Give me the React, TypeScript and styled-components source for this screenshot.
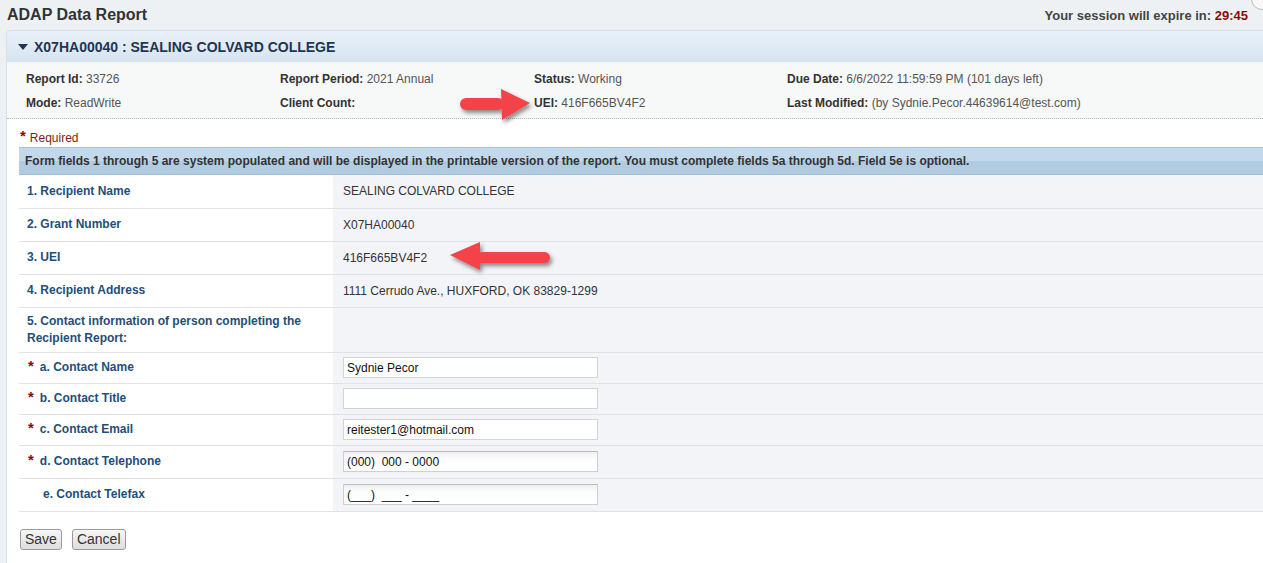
import styled, { createGlobalStyle } from 'styled-components';

const GlobalStyle = createGlobalStyle`
  html, body {
    margin: 0;
    padding: 0;
    background: #eef1f4;
    font-family: "Liberation Sans", Arial, sans-serif;
    overflow: hidden;
  }
`;

const info = [
  [
    { label: 'Report Id:', value: '33726' },
    { label: 'Report Period:', value: '2021 Annual' },
    { label: 'Status:', value: 'Working' },
    { label: 'Due Date:', value: '6/6/2022 11:59:59 PM (101 days left)' },
  ],
  [
    { label: 'Mode:', value: 'ReadWrite' },
    { label: 'Client Count:', value: '' },
    { label: 'UEI:', value: '416F665BV4F2' },
    { label: 'Last Modified:', value: '(by Sydnie.Pecor.44639614@test.com)' },
  ],
];

const fixedRows = [
  { label: '1. Recipient Name', value: 'SEALING COLVARD COLLEGE' },
  { label: '2. Grant Number', value: 'X07HA00040' },
  { label: '3. UEI', value: '416F665BV4F2' },
  { label: '4. Recipient Address', value: '1111 Cerrudo Ave., HUXFORD, OK 83829-1299' },
];

const contactRows = [
  { label: 'a. Contact Name', value: 'Sydnie Pecor', required: true, masked: false },
  { label: 'b. Contact Title', value: '', required: true, masked: false },
  { label: 'c. Contact Email', value: 'reitester1@hotmail.com', required: true, masked: false },
  { label: 'd. Contact Telephone', value: '(000)  000 - 0000', required: true, masked: true },
  { label: 'e. Contact Telefax', value: '(___)  ___ - ____', required: false, masked: true },
];

const Page = styled.div`
  position: relative;
  width: 1263px;
  height: 563px;
  padding-left: 6px;
  box-sizing: border-box;
  display: flex;
  flex-direction: column;
`;

const TopBar = styled.div`
  display: flex;
  justify-content: space-between;
  align-items: center;
  height: 30px;
  padding: 0 15px 0 1px;
`;

const Title = styled.h1`
  margin: 0;
  font-size: 16px;
  font-weight: bold;
  color: #333;
`;

const Session = styled.div`
  font-size: 13px;
  font-weight: bold;
  color: #444;
  span {
    color: #8b0a0a;
  }
`;

const CloseCircle = styled.div`
  position: absolute;
  right: -10px;
  top: -12px;
  width: 20px;
  height: 20px;
  border-radius: 50%;
  border: 1px solid #bbb;
  background: #f8f8f8;
`;

const Panel = styled.div`
  flex: 1;
  width: 1270px;
  background: #fff;
  border-left: 1px solid #d6e0ea;
  border-top-left-radius: 4px;
`;

const PanelHeader = styled.div`
  display: flex;
  align-items: center;
  gap: 6px;
  height: 32px;
  padding-left: 11px;
  background: linear-gradient(#e9f1f9, #d6e4f0);
  border-top: 1px solid #d3dfeb;
  border-top-left-radius: 4px;
  box-sizing: border-box;
  font-size: 14px;
  font-weight: bold;
  color: #1f3552;
`;

const Caret = styled.span`
  width: 0;
  height: 0;
  border-left: 5px solid transparent;
  border-right: 5px solid transparent;
  border-top: 6px solid #1f3552;
  margin-top: 1px;
`;

const InfoBlock = styled.div`
  background: #f7f8f8;
  padding: 5px 0 3px 19px;
  border-bottom: 1px dotted #b5b5b5;
`;

const InfoRow = styled.div`
  display: grid;
  grid-template-columns: 254px 254px 253px 1fr;
  height: 24px;
  align-items: center;
  font-size: 12px;
  color: #555;
  b {
    color: #333;
  }
`;

const Body = styled.div`
  padding: 10px 0 0 12px;
`;

const RequiredNote = styled.div`
  font-size: 12px;
  color: #7a1f16;
  padding-left: 1px;
  height: 17px;
  display: flex;
  align-items: center;
  gap: 4px;
`;

const Star = styled.span`
  color: #8b0a0a;
  font-size: 15px;
  font-weight: bold;
  line-height: 1;
  transform: translateY(-2px);
`;

const Banner = styled.div`
  margin-top: 1px;
  height: 28px;
  display: flex;
  align-items: center;
  padding-left: 6px;
  background: linear-gradient(#c2d8eb 0%, #c2d8eb 50%, #b1cbe0 52%, #b1cbe0 100%);
  border-top: 1px solid #a9c3da;
  border-bottom: 1px solid #a3bdd4;
  box-sizing: border-box;
  font-size: 12px;
  font-weight: bold;
  color: #333;
`;

const Table = styled.table`
  width: 100%;
  border-collapse: collapse;
  font-size: 12px;
`;

const Row = styled.tr<{ $height: number }>`
  height: ${(p) => p.$height}px;
  border-bottom: 1px solid #e0e2e6;
`;

const LabelCell = styled.td`
  width: 314px;
  padding: 0 0 0 8px;
  box-sizing: border-box;
  font-weight: bold;
  color: #1f4e79;
  line-height: 17px;
  background: #fff;
`;

const SubLabel = styled.div<{ $required: boolean }>`
  display: flex;
  align-items: center;
  gap: 6px;
  padding-left: ${(p) => (p.$required ? '1px' : '16px')};
`;

const ValueCell = styled.td`
  padding: 0 0 0 10px;
  background: #f3f4f8;
  color: #333;
`;

const Input = styled.input<{ $masked: boolean }>`
  width: 255px;
  height: 21px;
  box-sizing: border-box;
  border: 1px solid ${(p) => (p.$masked ? '#cfcfcf' : '#d4d4d4')};
  border-top-color: ${(p) => (p.$masked ? '#bcbcbc' : '#d4d4d4')};
  background: ${(p) => (p.$masked ? 'linear-gradient(#f0f0f0, #fdfdfd 40%, #fff)' : '#fff')};
  padding: 0 3px;
  font-family: "Liberation Sans", Arial, sans-serif;
  font-size: 12px;
  color: #111;
  outline: none;
`;

const Buttons = styled.div`
  display: flex;
  gap: 10px;
  padding: 17px 0 0 1px;
`;

const Button = styled.button`
  height: 21px;
  padding: 0 4px;
  border: 1px solid #9a9a9a;
  border-radius: 3px;
  background: linear-gradient(#f6f6f6, #dedede);
  font-family: "Liberation Sans", Arial, sans-serif;
  font-size: 14px;
  color: #333;
`;

const ArrowMark = styled.svg<{ $x: number; $y: number }>`
  position: absolute;
  left: ${(p) => p.$x}px;
  top: ${(p) => p.$y}px;
  overflow: visible;
`;

function RightArrow() {
  return (
    <ArrowMark $x={456} $y={86} width={80} height={40}>
      <defs>
        <filter id="sh1" x="-20%" y="-40%" width="150%" height="180%">
          <feDropShadow dx="2" dy="3" stdDeviation="2" floodColor="#000" floodOpacity="0.45" />
        </filter>
      </defs>
      <g filter="url(#sh1)" fill="#f4434a">
        <rect x="4" y="12" width="44" height="12" rx="6" />
        <polygon points="45,3 74,17 46,34" />
      </g>
    </ArrowMark>
  );
}

function LeftArrow() {
  return (
    <ArrowMark $x={446} $y={238} width={110} height={36}>
      <defs>
        <filter id="sh2" x="-20%" y="-40%" width="150%" height="180%">
          <feDropShadow dx="2" dy="3" stdDeviation="2" floodColor="#000" floodOpacity="0.45" />
        </filter>
      </defs>
      <g filter="url(#sh2)" fill="#f4434a">
        <rect x="30" y="14" width="74" height="11" rx="5.5" />
        <polygon points="4,17 34,4 34,32" />
      </g>
    </ArrowMark>
  );
}

export default function App() {
  return (
    <>
      <GlobalStyle />
      <Page>
        <CloseCircle />
        <TopBar>
          <Title>ADAP Data Report</Title>
          <Session>
            Your session will expire in: <span>29:45</span>
          </Session>
        </TopBar>

        <Panel>
          <PanelHeader>
            <Caret />
            X07HA00040 : SEALING COLVARD COLLEGE
          </PanelHeader>

          <InfoBlock>
            {info.map((row, i) => (
              <InfoRow key={i}>
                {row.map((item) => (
                  <div key={item.label}>
                    <b>{item.label}</b> {item.value}
                  </div>
                ))}
              </InfoRow>
            ))}
          </InfoBlock>

          <Body>
            <RequiredNote>
              <Star>*</Star>Required
            </RequiredNote>
            <Banner>
              Form fields 1 through 5 are system populated and will be displayed in the printable version of
              the report. You must complete fields 5a through 5d. Field 5e is optional.
            </Banner>

            <Table>
              <tbody>
                {fixedRows.map((r) => (
                  <Row key={r.label} $height={33}>
                    <LabelCell>{r.label}</LabelCell>
                    <ValueCell>{r.value}</ValueCell>
                  </Row>
                ))}
                <Row $height={45}>
                  <LabelCell>
                    5. Contact information of person completing the
                    <br />
                    Recipient Report:
                  </LabelCell>
                  <ValueCell />
                </Row>
                {contactRows.map((r, i) => (
                  <Row key={r.label} $height={i < 3 ? 31 : 33}>
                    <LabelCell>
                      <SubLabel $required={r.required}>
                        {r.required && <Star>*</Star>}
                        {r.label}
                      </SubLabel>
                    </LabelCell>
                    <ValueCell>
                      <Input $masked={r.masked} defaultValue={r.value} />
                    </ValueCell>
                  </Row>
                ))}
              </tbody>
            </Table>

            <Buttons>
              <Button>Save</Button>
              <Button>Cancel</Button>
            </Buttons>
          </Body>
        </Panel>

        <RightArrow />
        <LeftArrow />
      </Page>
    </>
  );
}
